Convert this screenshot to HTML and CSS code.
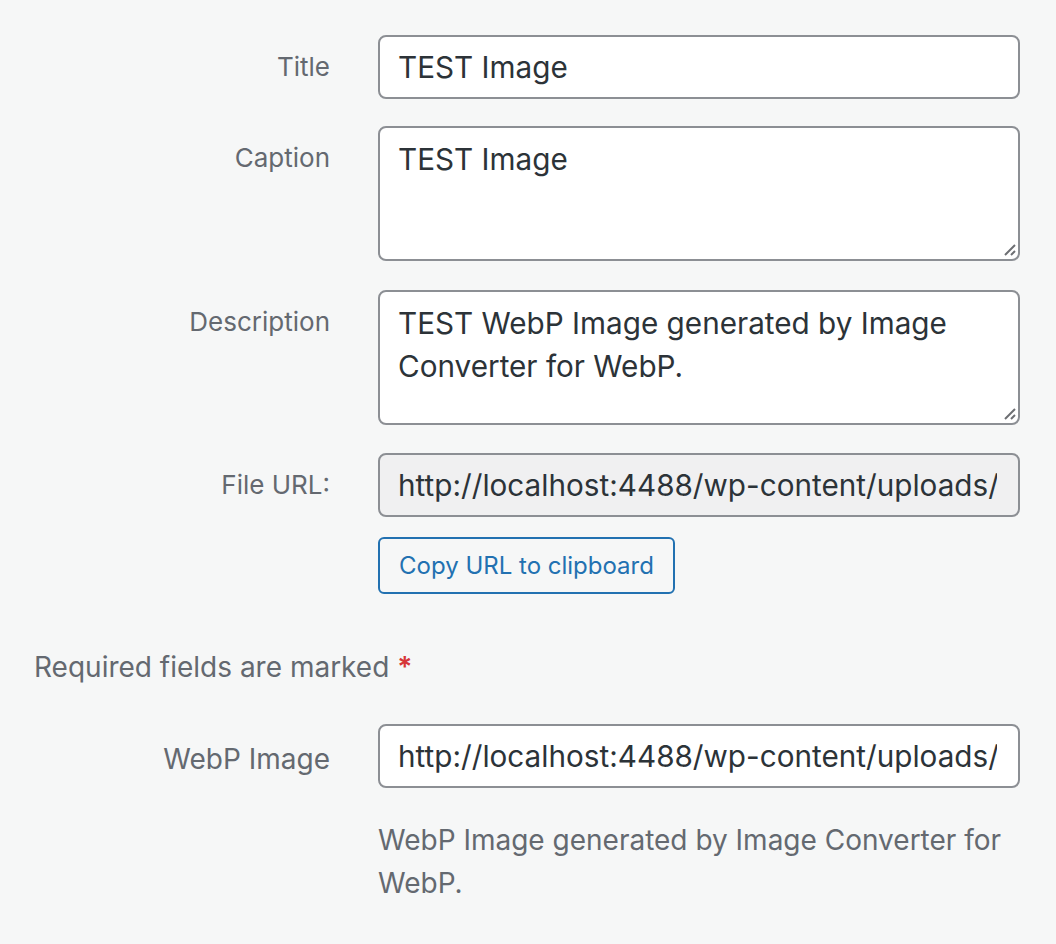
FILE: index.html
```html
<!DOCTYPE html>
<html lang="en">
<head>
<meta charset="utf-8">
<title>Attachment details</title>
<link rel="stylesheet" href="styles.css">
</head>
<body>
<div class="settings">
  <div class="row">
    <span class="name"></span>
    <p class="help top-help">Leave empty if the image is purely decorative.</p>
  </div>

  <div class="row r-title">
    <label class="name" for="title">Title</label>
    <input class="field" id="title" type="text" value="TEST Image">
  </div>

  <div class="row r-caption">
    <label class="name" for="caption">Caption</label>
    <div class="area-wrap">
      <textarea class="field area" id="caption">TEST Image</textarea>
      <svg class="grip" width="16" height="16" viewBox="0 0 16 16"><path d="M14 4 L4 14 M14 10 L10 14" stroke="#6d6f73" stroke-width="2" fill="none"/></svg>
    </div>
  </div>

  <div class="row r-desc">
    <label class="name" for="desc">Description</label>
    <div class="area-wrap">
      <textarea class="field area" id="desc">TEST WebP Image generated by Image Converter for WebP.</textarea>
      <svg class="grip" width="16" height="16" viewBox="0 0 16 16"><path d="M14 4 L4 14 M14 10 L10 14" stroke="#6d6f73" stroke-width="2" fill="none"/></svg>
    </div>
  </div>

  <div class="row r-url">
    <label class="name" for="url">File URL:</label>
    <div class="url-col">
      <input class="field readonly" id="url" type="text" readonly value="http://localhost:4488/wp-content/uploads/2023/01/test-image.webp">
      <div class="copy-row"><button class="btn" type="button">Copy URL to clipboard</button></div>
    </div>
  </div>

  <p class="required">Required fields are marked <span class="req">*</span></p>

  <div class="row r-webp">
    <label class="name name-lg" for="webp">WebP Image</label>
    <div class="webp-col">
      <input class="field" id="webp" type="text" value="http://localhost:4488/wp-content/uploads/2023/01/test-image.webp">
      <p class="help">WebP Image generated by Image Converter for WebP.</p>
    </div>
  </div>
</div>
</body>
</html>
```

FILE: styles.css
```css
* { box-sizing: border-box; }

html, body {
  margin: 0;
  padding: 0;
  background: #f6f7f7;
}

body {
  font-family: Inter, "Noto Sans", "Liberation Sans", sans-serif;
  color: #1d2327;
  overflow: hidden;
  height: 944px;
}

.settings {
  width: 1056px;
  margin-top: -40px;
}

.row {
  display: grid;
  grid-template-columns: 330px 642px;
  column-gap: 48px;
  align-items: start;
}

.name {
  text-align: right;
  font-size: 26px;
  line-height: 36px;
  color: #646970;
  padding-top: 14px;
}

.name-lg {
  font-size: 28px;
  padding-top: 17px;
}

.help {
  margin: 0;
  font-size: 28px;
  line-height: 43px;
  color: #646970;
}

.top-help {
  margin: 0;
}

.r-title { margin-top: 32px; }
.r-caption { margin-top: 27px; }
.r-desc { margin-top: 29px; }
.r-url { margin-top: 28px; }
.r-webp { margin-top: 39px; }

.field {
  display: block;
  width: 642px;
  height: 64px;
  margin: 0;
  padding: 0 21px 0 18px;
  border: 2px solid #8c8f94;
  border-radius: 8px;
  background: #fff;
  font-family: inherit;
  font-size: 29.7px;
  color: #2c3338;
  outline: none;
  box-shadow: none;
}

.readonly {
  background: #f0f0f1;
}

.area-wrap {
  position: relative;
  width: 642px;
}

.area {
  height: 135px;
  padding: 10px 18px;
  line-height: 43px;
  resize: none;
  overflow: hidden;
}

.grip {
  position: absolute;
  right: 3px;
  bottom: 4px;
}

.copy-row {
  margin-top: 20px;
}

.btn {
  display: inline-block;
  height: 57px;
  padding: 0 19px;
  border: 2px solid #2271b1;
  border-radius: 6px;
  background: #f6f7f7;
  color: #2271b1;
  font-family: inherit;
  font-size: 24px;
  line-height: 53px;
  cursor: pointer;
}

.required {
  margin: 55px 0 0 34px;
  font-size: 28px;
  line-height: 36px;
  color: #646970;
}

.req {
  color: #d63638;
  font-weight: 600;
}

.webp-col .help {
  margin-top: 31px;
}
```
